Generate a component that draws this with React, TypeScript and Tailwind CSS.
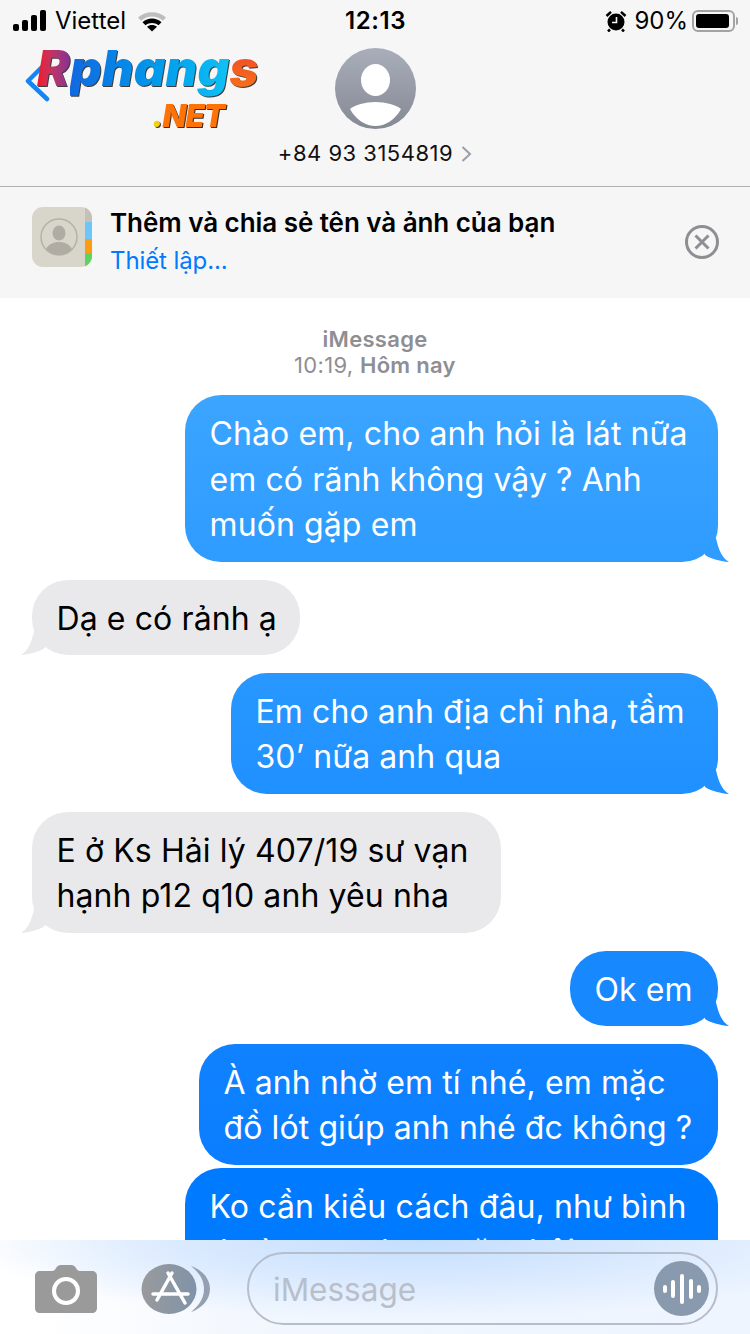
import type { ReactNode } from "react"

const sans = "font-['Inter','Noto_Sans',sans-serif]"

function StatusBar() {
  return (
    <div className="flex h-[40px] items-center justify-between pl-[13px] pr-[12px] pt-[1px] text-[24px] leading-none text-black">
      <div className="flex w-[240px] items-center">
        <svg width="34" height="22" viewBox="0 0 34 22" fill="#000">
          <rect x="0" y="14" width="6" height="7" rx="2" />
          <rect x="9" y="10" width="6" height="11" rx="2" />
          <rect x="18" y="5" width="6" height="16" rx="2" />
          <rect x="27" y="0" width="6" height="21" rx="2" />
        </svg>
        <span className="ml-[8px] text-[24px]">Viettel</span>
        <svg className="ml-[11px]" width="30" height="22" viewBox="0 0 30 22">
          <path d="M1 7.5C9 .5 21 .5 29 7.5l-3 3.2C19.5 5 10.5 5 4 10.7z" fill="#bdbdbd" />
          <path d="M5.5 12.2c5.500-5 13.500-5 19 0l-3 3.1c-3.800-3.200-9.200-3.200-13 0z" fill="#000" />
          <path d="M10 16.800c2.800-2.500 7.200-2.500 10 0L15 21.500z" fill="#000" />
        </svg>
      </div>
      <span className="text-[24px] font-semibold tracking-[0.6px]">12:13</span>
      <div className="flex w-[240px] items-center justify-end">
        <svg width="22" height="22" viewBox="0 0 22 22">
          <circle cx="11" cy="12" r="8.5" fill="#000" />
          <path d="M1.500 6 6 1.800M20.500 6 16 1.800M5 19.500l-2 2M17 19.500l2 2" stroke="#000" strokeWidth="2.5" />
          <path d="M11.500 7v5.500H7" stroke="#f6f6f6" strokeWidth="1.6" fill="none" />
        </svg>
        <span className="ml-[7px] text-[24px]">90%</span>
        <div className="ml-[4px] flex h-[22px] w-[43px] items-center rounded-[6px] border-2 border-[#a3a3a3] p-[2px]">
          <div className="h-full w-[33px] rounded-[3px] bg-black" />
        </div>
        <div className="ml-[1px] h-[8px] w-[2px] rounded-r-full bg-[#a3a3a3]" />
      </div>
    </div>
  )
}

// watermark that sits over the header
function Logo() {
  return (
    <div className="absolute left-[25px] top-[10px] h-[80px] w-[240px] font-['Inter',sans-serif] font-black italic">
      <svg className="absolute left-0 top-[12px]" width="28" height="42" viewBox="0 0 28 42" fill="none">
        <path d="M20 2 3 19l19 18" stroke="#1585f5" strokeWidth="4.5" strokeLinecap="round" strokeLinejoin="round" />
      </svg>
      <div className="absolute left-[12px] top-[-11px] flex whitespace-nowrap text-[49px] leading-[60px] tracking-[0.2px] drop-shadow-[1px_1px_0_rgba(0,0,0,0.75)]">
        <span className="bg-gradient-to-r from-[#f40e1a] to-[#7a2a9c] bg-clip-text pr-[4px] text-transparent">R</span>
        <span className="ml-[-4px] bg-gradient-to-r from-[#1268e0] to-[#12c4f4] bg-clip-text pr-[4px] text-transparent">phang</span>
        <span className="ml-[-4px] bg-gradient-to-b from-[#f0362a] to-[#f87a10] bg-clip-text pr-[4px] text-transparent">s</span>
      </div>
      <div className="absolute left-[127px] top-[50px] text-[31px] leading-[32px] tracking-[-1px] text-[#ff7206] drop-shadow-[1px_1px_0_rgba(0,0,0,0.8)]">
        <span className="text-[#f4d010]">.</span>NET
      </div>
    </div>
  )
}

function ContactHeader() {
  return (
    <div className="relative h-[147px] border-b border-[#b2b2b2]">
      <Logo />
      <div className="flex flex-col items-center pt-[8px]">
        <div className="h-[81px] w-[81px] overflow-hidden rounded-full bg-gradient-to-b from-[#a9aebb] to-[#858994]">
          <svg width="81" height="81" viewBox="0 0 81 81" fill="#fff">
            <ellipse cx="40.5" cy="32" rx="14.5" ry="16" />
            <path d="M15 61C20 57 30 54 40.5 54S61 57 66 61C60 72 50 78 40.5 78S21 72 15 61z" />
          </svg>
        </div>
        <div className="mt-[11px] flex items-center text-[22px] leading-[26px] tracking-[0.5px] text-[#111]">
          +84 93 3154819
          <svg className="ml-[8px] mt-[2px]" width="11" height="18" viewBox="0 0 11 18" fill="none">
            <path d="M1.5 2 9 9l-7.500 7" stroke="#9a9ea8" strokeWidth="2" />
          </svg>
        </div>
      </div>
    </div>
  )
}

function ShareBanner() {
  return (
    <div className="flex h-[111px] items-center pb-[2px] pl-[32px] pr-[30px]">
      <div className="mb-[9px] flex h-[60px] w-[60px] overflow-hidden rounded-[11px] bg-[#d8d5cb]">
        <div className="flex flex-1 items-center justify-center">
          <svg width="40" height="40" viewBox="0 0 40 40" fill="none">
            <circle cx="20" cy="20" r="18" stroke="#b5b1a8" strokeWidth="1.5" />
            <ellipse cx="20" cy="16" rx="6.5" ry="7.5" fill="#b0aca3" />
            <path d="M7 32c3-5 7-7 13-7s10 2 13 7c-3 3-8 6-13 6s-10-3-13-6z" fill="#b0aca3" />
          </svg>
        </div>
        <div className="flex w-[7px] flex-col">
          <div className="h-[15px] bg-[#c4c1b8]" />
          <div className="h-[17px] bg-[#6cc6fa]" />
          <div className="h-[14px] bg-[#fb9d0e]" />
          <div className="h-[14px] bg-[#5ed35f]" />
        </div>
      </div>
      <div className="ml-[18px] flex-1">
        <div className="text-[26px] font-semibold leading-[30px] tracking-[-0.05px] text-black">Thêm và chia sẻ tên và ảnh của bạn</div>
        <div className="mt-[8px] text-[24px] leading-[30px] tracking-[-0.1px] text-[#007aff]">Thiết lập...</div>
      </div>
      <svg width="36" height="36" viewBox="0 0 36 36" fill="none" stroke="#8e8e93" strokeWidth="3">
        <circle cx="18" cy="18" r="15.5" />
        <path d="m11.500 11.500 13 13m0-13-13 13" />
      </svg>
    </div>
  )
}

function Tail({ side, color }: { side: "left" | "right"; color: string }) {
  if (side === "right") {
    return (
      <svg className="absolute bottom-0 right-[-12px]" width="28" height="24" viewBox="0 0 28 24">
        <path d="M0 0H13.9C15.5 6 18 19 27 24C19 23.5 9 21 3 17z" fill={color} />
      </svg>
    )
  }
  return (
    <svg className="absolute bottom-0 left-[-12px]" width="28" height="24" viewBox="0 0 28 24">
      <path d="M28 0H14.1C12.5 6 10 19 1 24C9 23.5 19 21 25 17z" fill={color} />
    </svg>
  )
}

function Bubble({
  side,
  className,
  tail,
  children,
}: {
  side: "left" | "right"
  className: string
  tail?: string
  children: ReactNode
}) {
  return (
    <div
      className={`relative whitespace-nowrap rounded-[36px] pl-[24.5px] text-[32px] leading-[45.5px] tracking-[0.1px] ${
        side === "right" ? "self-end text-white" : "self-start text-black"
      } ${className}`}
    >
      {tail && <Tail side={side} color={tail} />}
      <span className="relative top-[1px]">{children}</span>
    </div>
  )
}

function Thread() {
  return (
    <div className="flex h-[942px] flex-col gap-[18px] overflow-hidden px-[32px]">
      <div className="mb-[-0.75px] pt-[28px] text-center text-[22px] leading-[26px] tracking-[0.3px] text-[#8e8e93]">
        <div className="font-semibold">iMessage</div>
        <div>
          10:19, <span className="font-semibold">Hôm nay</span>
        </div>
      </div>
      <Bubble side="right" tail="#2f9cff" className="w-[533px] bg-gradient-to-b from-[#3ba5ff] to-[#2e9bff] py-[15px]">
        Chào em, cho anh hỏi là lát nữa
        <br />
        em có rãnh không vậy ? Anh
        <br />
        muốn gặp em
      </Bubble>
      <Bubble side="left" tail="#e9e9eb" className="w-[268px] bg-[#e9e9eb] py-[14.75px]">
        Dạ e có rảnh ạ
      </Bubble>
      <Bubble side="right" tail="#2091ff" className="w-[487px] bg-gradient-to-b from-[#2898ff] to-[#1f90ff] py-[15px]">
        Em cho anh địa chỉ nha, tầm
        <br />
        30’ nữa anh qua
      </Bubble>
      <Bubble side="left" tail="#e9e9eb" className="w-[469px] bg-[#e9e9eb] py-[15px]">
        E ở Ks Hải lý 407/19 sư vạn
        <br />
        hạnh p12 q10 anh yêu nha
      </Bubble>
      <Bubble side="right" tail="#1888ff" className="w-[148px] bg-[#1888ff] py-[14.75px]">
        Ok em
      </Bubble>
      <Bubble side="right" className="w-[519px] bg-gradient-to-b from-[#1082ff] to-[#0a7eff] py-[15px]">
        À anh nhờ em tí nhé, em mặc
        <br />
        đồ lót giúp anh nhé đc không ?
      </Bubble>
      <Bubble side="right" className="mt-[-15px] w-[533px] bg-[#007aff] py-[15px]">
        Ko cần kiểu cách đâu, như bình
        <br />
        thường em hay mặc thôi
      </Bubble>
    </div>
  )
}

function InputBar() {
  return (
    <div className="relative z-10 flex h-[94px] items-center bg-[radial-gradient(ellipse_460px_80px_at_420px_0px,#c3deff_0%,#d9e9fe_50%,rgba(235,243,255,0)_100%),linear-gradient(to_right,#ffffff_5%,#f2f7fe_35%,#eef5ff_100%)] pl-[35px] pr-[32px] pt-[3px]">
      <svg width="62" height="48" viewBox="0 0 62 48">
        <path
          d="M5 6h12c2 0 3-1 4-3 1-2 3-3 5-3h10c2 0 4 1 5 3 1 2 2 3 4 3h12c3 0 5 2 5 5v32c0 3-2 5-5 5H5c-3 0-5-2-5-5V11c0-3 2-5 5-5z"
          fill="#9a9a9a"
        />
        <circle cx="31" cy="26" r="12" fill="none" stroke="#fff" strokeWidth="4" />
      </svg>
      <svg className="ml-[44px]" width="71" height="50" viewBox="0 0 71 50">
        <defs>
          <linearGradient id="storeFill" x1="0" x2="1" y1="0" y2="0">
            <stop offset="0" stopColor="#9a9a9c" />
            <stop offset="1" stopColor="#7f93a8" />
          </linearGradient>
        </defs>
        <path d="M50 2c9 3 19 11 19 23S59 45 50 48c6-5 13-12 13-23S56 7 50 2z" fill="#94a0b1" />
        <ellipse cx="28" cy="25" rx="27.5" ry="25" fill="url(#storeFill)" />
        <path
          d="M31 9 16 36M27 9l17 30M12 30h35"
          fill="none"
          stroke="#fff"
          strokeWidth="3.5"
          strokeLinecap="round"
        />
      </svg>
      <div className="ml-[35px] flex h-[73px] flex-1 items-center justify-between rounded-[37px] border-2 border-[#b7becb] pl-[24px] pr-[7px]">
        <span className="pt-[3px] text-[31.5px] text-[#b8bfca]">iMessage</span>
        <div className="flex h-[55px] w-[55px] items-center justify-center rounded-full bg-[#8a9aae]">
          <svg width="38" height="30" viewBox="0 0 38 30" stroke="#fff" strokeWidth="4" strokeLinecap="round" fill="none">
            <path d="M2 13v4M10 8v14M19 2v26M28 7v16M36 13v4" />
          </svg>
        </div>
      </div>
    </div>
  )
}

export default function App() {
  return (
    <div className={`flex h-[1334px] w-[750px] flex-col overflow-hidden bg-white ${sans}`}>
      <div className="bg-[#f6f6f6]">
        <StatusBar />
        <ContactHeader />
        <ShareBanner />
      </div>
      <Thread />
      <InputBar />
    </div>
  )
}
